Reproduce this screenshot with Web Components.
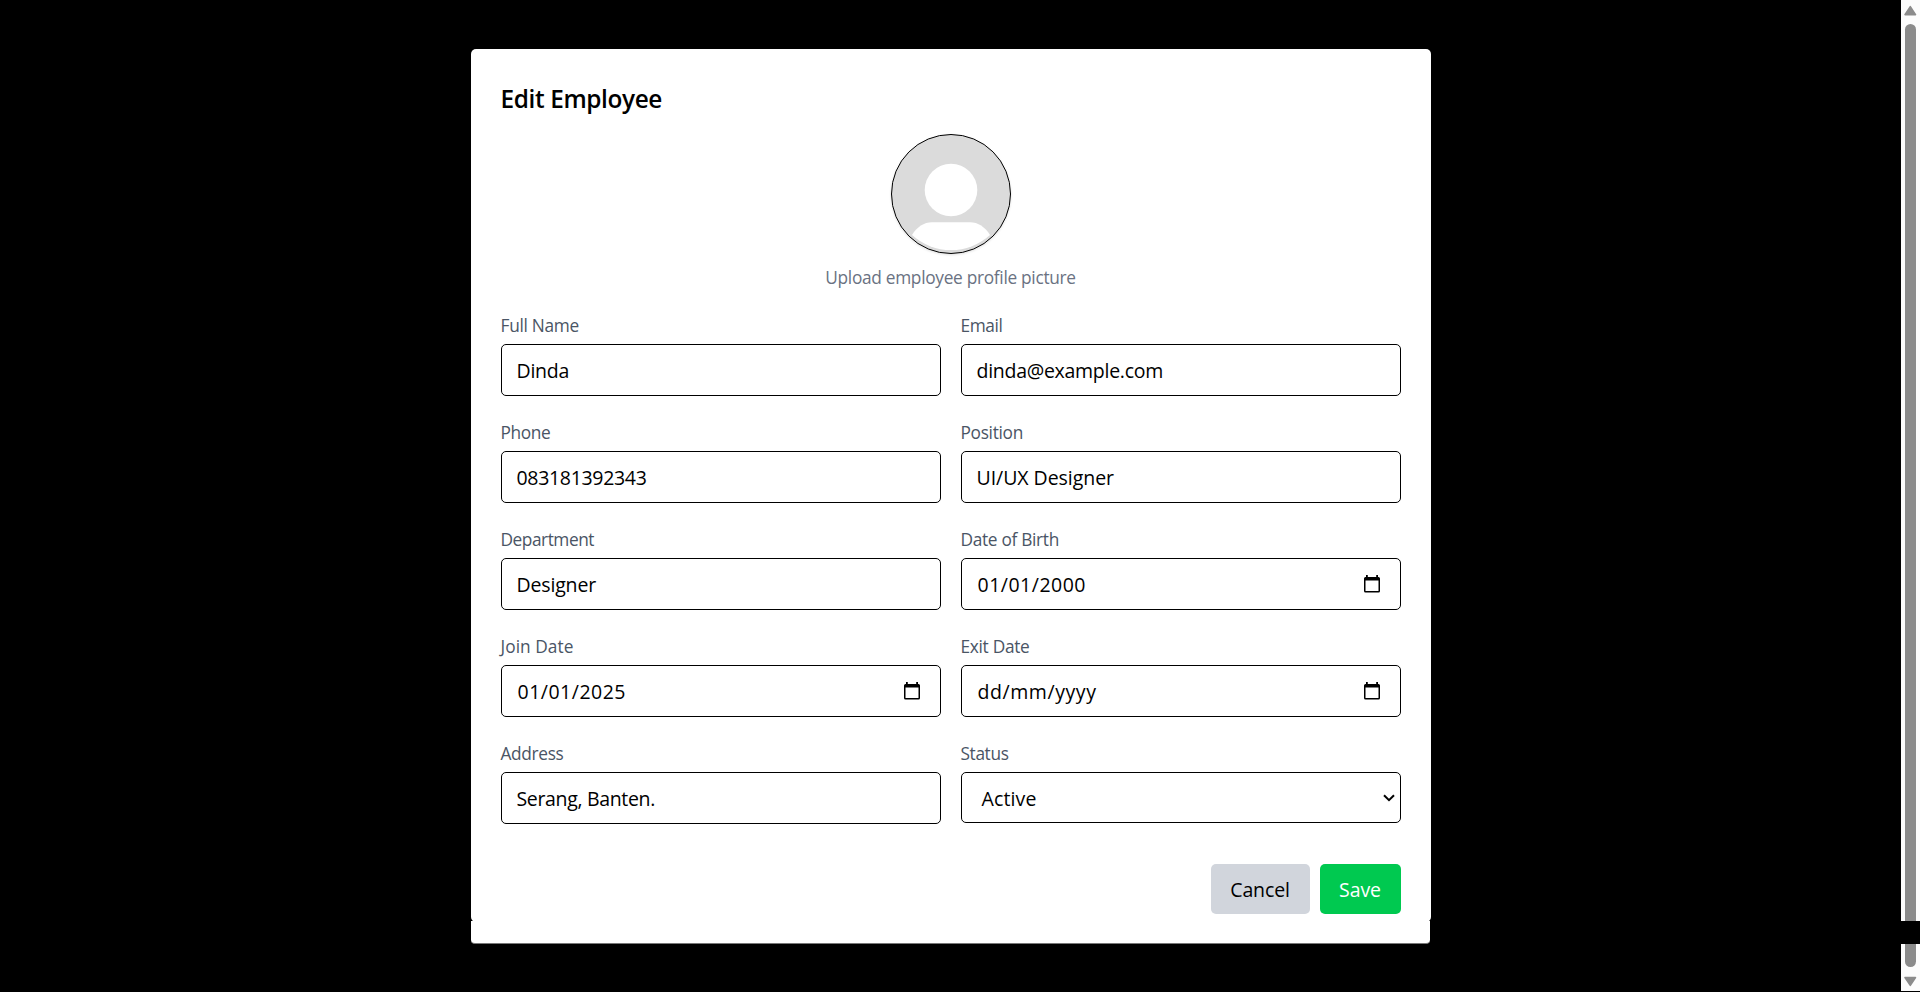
<!DOCTYPE html>
<html lang="en">
<head>
<meta charset="utf-8">
<title>Edit Employee</title>
<style>
html,body{margin:0;height:100%;background:#000;overflow:hidden}
body{font-family:"Open Sans","Noto Sans",sans-serif;color:#000}
</style>
</head>
<body>
<app-screen>
  <edit-dialog heading="Edit Employee">
    <profile-picture slot="picture"><text-run w="249">Upload employee profile picture</text-run></profile-picture>
    <form-field label="Full Name" lw="77" value="Dinda" vw="51"></form-field>
    <form-field label="Email" lw="40.5" value="dinda@example.com" vw="185"></form-field>
    <form-field label="Phone" lw="48.5" value="083181392343" vw="128.5"></form-field>
    <form-field label="Position" lw="61" value="UI/UX Designer" vw="136"></form-field>
    <form-field label="Department" lw="92" value="Designer" vw="78"></form-field>
    <form-field label="Date of Birth" lw="97" value="01/01/2000" vw="107" kind="date"></form-field>
    <form-field label="Join Date" lw="71.5" value="01/01/2025" vw="107" kind="date"></form-field>
    <form-field label="Exit Date" lw="67.5" value="dd/mm/yyyy" vw="117.5" kind="date"></form-field>
    <form-field label="Address" lw="61.5" value="Serang, Banten." vw="137"></form-field>
    <form-field label="Status" lw="46.5" value="Active" vw="53.5" kind="select"></form-field>
    <action-button slot="actions" style="width:99px"><text-run w="58">Cancel</text-run></action-button>
    <action-button slot="actions" primary style="width:81px"><text-run w="40.5">Save</text-run></action-button>
  </edit-dialog>
  <scroll-rail slot="rail"></scroll-rail>
</app-screen>
<script>
const define = (name, html, setup) => customElements.define(name, class extends HTMLElement {
  constructor() {
    super();
    this.attachShadow({ mode: 'open' }).innerHTML = html;
  }
  connectedCallback() { if (setup) setup(this, this.shadowRoot); }
});

define('scroll-rail', `<style>
:host{display:flex;flex-direction:column;width:19px;height:991px;background:#fcfcfc}
svg{display:block}
</style>
<svg width="19" height="991" viewBox="0 0 19 991">
  <path d="M9.3 6.7 14.5 14.6H4Z" fill="#8b8b8b" stroke="#8b8b8b" stroke-width="1.6" stroke-linejoin="round"/>
  <rect x="4" y="24" width="11" height="943" rx="5.5" fill="#8b8b8b"/>
  <rect x="0" y="921" width="19" height="23"/>
  <path d="M9.3 985.3 14.5 977.6H4Z" fill="#8b8b8b" stroke="#8b8b8b" stroke-width="1.6" stroke-linejoin="round"/>
</svg>`);

define('app-screen', `<style>
:host{display:flex;height:992px;background:#000;overflow:hidden}
main{flex:1;display:flex;justify-content:center;align-items:flex-start;padding-top:49px}
</style><main><slot></slot></main><slot name="rail"></slot>`);

define('profile-picture', `<style>
:host{display:flex;flex-direction:column;align-items:center;font-size:17.3px;font-weight:370;line-height:25px;color:#6a7282}
svg{display:block;margin-bottom:11px;overflow:visible;filter:drop-shadow(0 1px 1px rgba(0,0,0,.12))}
</style>
<svg width="120" height="120" viewBox="0 0 120 120">
  <circle cx="60" cy="60" r="59.5" fill="#dbdbdb" stroke="#000"/>
  <circle cx="60" cy="56" r="26.3" fill="#fff"/>
  <path d="M21 101C26 93 33 88.3 41 88.3H79C87 88.3 94 93 99 101A58 58 0 0 1 21 101Z" fill="#fff"/>
</svg><slot></slot>`);

define('form-field', `<style>
:host{display:block;height:107px}
label{display:block;box-sizing:border-box;height:32px;padding-top:1px;font-size:17.3px;font-weight:370;line-height:25px;color:#4a5565}
.box{box-sizing:border-box;height:52px;border:1px solid #000;border-radius:5px;display:flex;align-items:center;justify-content:space-between;padding:0 15px;font-size:19.5px;line-height:28px;background:#fff}
.box text-run{padding-top:1px}
.date{padding:0 19px 0 16px}
.select{height:51px;padding:0 5px 0 20px}
.select text-run{padding-top:2px}
svg{display:block}
</style><label><text-run></text-run></label><div class="box"><text-run></text-run></div>`, (el, root) => {
  const [l, v] = root.querySelectorAll('text-run');
  const fill = (run, text, w) => {
    run.textContent = text;
    run.setAttribute('w', w);
  };
  fill(l, el.getAttribute('label'), el.getAttribute('lw'));
  fill(v, el.getAttribute('value'), el.getAttribute('vw'));
  const kind = el.getAttribute('kind'), box = root.querySelector('.box');
  if (!kind) return;
  box.classList.add(kind);
  box.insertAdjacentHTML('beforeend', kind === 'date'
    ? `<svg width="18" height="20" viewBox="0 0 18 20" style="margin-top:-1px"><path d="M3 1h1.800v2h8.400v-2h1.800v2H15.500a1.500 1.500 0 0 1 1.500 1.500V17a1.500 1.500 0 0 1-1.500 1.500h-13A1.500 1.500 0 0 1 1 17V4.500a1.500 1.500 0 0 1 1.500-1.500H3ZM2.500 6.600V17h13V6.600Z" fill="#000" fill-rule="evenodd"/></svg>`
    : `<svg width="12" height="8" viewBox="0 0 12 8"><path d="M1 1.200 6 6.200 11 1.200" fill="none" stroke="#000" stroke-width="2"/></svg>`);
});

define('action-button', `<style>
:host{box-sizing:border-box;display:flex;justify-content:center;align-items:center;height:50px;padding-top:2px;border-radius:5px;background:#d1d5dc;font-size:19.5px;line-height:28px;color:#000}
:host([primary]){background:#00c950;color:#fff}
</style><slot></slot>`);

define('edit-dialog', `<style>
:host{display:block;width:960px}
section{box-sizing:border-box;height:873px;padding:30px;background:#fff;border-radius:5px}
h2{box-sizing:border-box;margin:0;height:55px;padding-top:1px;font-size:24.400px;line-height:37px;font-weight:550}
.grid{display:grid;grid-template-columns:440px 440px;column-gap:20px;margin-top:22px}
.actions{display:flex;justify-content:flex-end;gap:10px;margin-top:17px}
.tail{width:959px;height:23px;box-sizing:border-box;background:#fff;border-bottom:1px solid #777;border-radius:0 0 4px 4px;margin-top:-1px}
</style>
<section>
  <h2><text-run></text-run></h2>
  <slot name="picture"></slot>
  <div class="grid"><slot></slot></div>
  <div class="actions"><slot name="actions"></slot></div>
</section><div class="tail"></div>`, (el, root) => {
  const t = root.querySelector('h2 text-run');
  t.textContent = el.getAttribute('heading');
  t.setAttribute('w', 160);
});

/* A single line of text tracked to a given width. Registered last, so the font
   that its container sets is already in force when it measures itself. */
define('text-run', `<style>:host{display:inline-block;white-space:pre}</style><span><slot></slot></span>`, (el, root) => {
  const span = root.querySelector('span');
  const natural = span.getBoundingClientRect().width;
  const n = el.textContent.length;
  const w = parseFloat(el.getAttribute('w'));
  if (w && n) span.style.letterSpacing = ((w + 1.5 - natural) / n).toFixed(3) + 'px';
});
</script>
</body>
</html>
